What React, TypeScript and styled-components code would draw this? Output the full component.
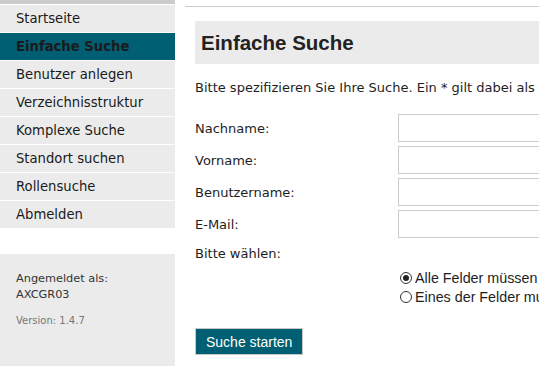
import { Fragment } from "react";
import styled, { createGlobalStyle } from "styled-components";

const GlobalStyle = createGlobalStyle`
  html, body {
    margin: 0;
    padding: 0;
    background: #ffffff;
    overflow: hidden;
  }
  body {
    font-family: "DejaVu Sans", "Open Sans", sans-serif;
    color: #1e1e1e;
  }
`;

const Page = styled.div`
  display: flex;
  width: 700px;
  min-height: 366px;
`;

const Sidebar = styled.aside`
  width: 175px;
  flex-shrink: 0;
  display: flex;
  flex-direction: column;
  border-top: 4px solid #cccccc;
  padding-top: 1px;
`;

const Menu = styled.nav`
  display: flex;
  flex-direction: column;
  gap: 1px;
`;

const MenuItem = styled.a<{ $active?: boolean }>`
  display: flex;
  align-items: center;
  height: 27px;
  padding-left: 16px;
  font-size: 13.2px;
  font-weight: ${(p) => (p.$active ? 700 : 400)};
  background: ${(p) => (p.$active ? "#005f73" : "#ebebeb")};
  color: #1a1a1a;
  text-decoration: none;
`;

const InfoBox = styled.div`
  margin-top: 26px;
  flex: 1;
  background: #ebebeb;
  padding: 17px 16px;
  font-size: 11.3px;
  line-height: 16px;
  color: #333333;
`;

const Version = styled.div`
  margin-top: 10px;
  font-size: 10px;
  color: #777777;
`;

const Main = styled.main`
  flex: 1;
  margin: 6px 0 0 10px;
  border-top: 1px solid #cccccc;
  padding: 14px 10px 0;
`;

const TitleBox = styled.div`
  height: 43px;
  background: #ebebeb;
  display: flex;
  align-items: center;
  padding-left: 6px;
`;

const Title = styled.h1`
  margin: 0;
  font-family: "Liberation Sans", Arial, sans-serif;
  font-size: 20.5px;
  font-weight: 700;
  color: #222222;
`;

const Intro = styled.p`
  margin: 15px 0 0;
  font-size: 13px;
  line-height: 18px;
  white-space: nowrap;
`;

const Form = styled.form`
  margin-top: 17px;
  display: grid;
  grid-template-columns: 203px 260px;
  row-gap: 4px;
  align-items: center;
`;

const Label = styled.label`
  font-size: 13px;
`;

const Input = styled.input`
  box-sizing: border-box;
  height: 28px;
  width: 100%;
  border: 1px solid #cccccc;
  margin: 0;
`;

const ChoiceLabel = styled.div`
  grid-column: 1 / 3;
  font-size: 13px;
  margin-top: 3px;
  line-height: 18px;
`;

const Radios = styled.div`
  grid-column: 2;
  display: flex;
  flex-direction: column;
  gap: 1px;
  margin: 2px 0 0 2px;
`;

const RadioRow = styled.label`
  display: flex;
  align-items: center;
  gap: 3px;
  font-family: "Liberation Sans", Arial, sans-serif;
  font-size: 14.3px;
  line-height: 18px;
  white-space: nowrap;
`;

const RadioDot = styled.span<{ $checked?: boolean }>`
  box-sizing: border-box;
  flex: 0 0 12px;
  width: 12px;
  height: 12px;
  border-radius: 50%;
  border: 1px solid #333333;
  display: flex;
  align-items: center;
  justify-content: center;
  &::after {
    content: "";
    width: 6px;
    height: 6px;
    border-radius: 50%;
    background: ${(p) => (p.$checked ? "#222222" : "transparent")};
  }
`;

const Button = styled.button`
  grid-column: 1;
  justify-self: start;
  margin-top: 18px;
  height: 27px;
  padding: 0 10px;
  background: #005f73;
  border: 1px solid #c8c8c8;
  color: #ffffff;
  font-family: "Liberation Sans", Arial, sans-serif;
  font-size: 14px;
`;

const menu = [
  "Startseite",
  "Einfache Suche",
  "Benutzer anlegen",
  "Verzeichnisstruktur",
  "Komplexe Suche",
  "Standort suchen",
  "Rollensuche",
  "Abmelden",
];

const fields = ["Nachname:", "Vorname:", "Benutzername:", "E-Mail:"];

export const App = () => {
  return (
    <>
      <GlobalStyle />
      <Page>
        <Sidebar>
          <Menu>
            {menu.map((m) => (
              <MenuItem key={m} $active={m === "Einfache Suche"}>
                {m}
              </MenuItem>
            ))}
          </Menu>
          <InfoBox>
            <div>Angemeldet als:</div>
            <div>AXCGR03</div>
            <Version>Version: 1.4.7</Version>
          </InfoBox>
        </Sidebar>
        <Main>
          <TitleBox>
            <Title>Einfache Suche</Title>
          </TitleBox>
          <Intro>
            Bitte spezifizieren Sie Ihre Suche. Ein * gilt dabei als Platzhalter.
          </Intro>
          <Form>
            {fields.map((f) => (
              <Fragment key={f}>
                <Label>{f}</Label>
                <Input type="text" />
              </Fragment>
            ))}
            <ChoiceLabel>Bitte wählen:</ChoiceLabel>
            <Radios>
              <RadioRow>
                <RadioDot $checked />
                Alle Felder müssen übereinstimmen
              </RadioRow>
              <RadioRow>
                <RadioDot />
                Eines der Felder muss übereinstimmen
              </RadioRow>
            </Radios>
            <Button type="button">Suche starten</Button>
          </Form>
        </Main>
      </Page>
    </>
  );
};

export default App;
